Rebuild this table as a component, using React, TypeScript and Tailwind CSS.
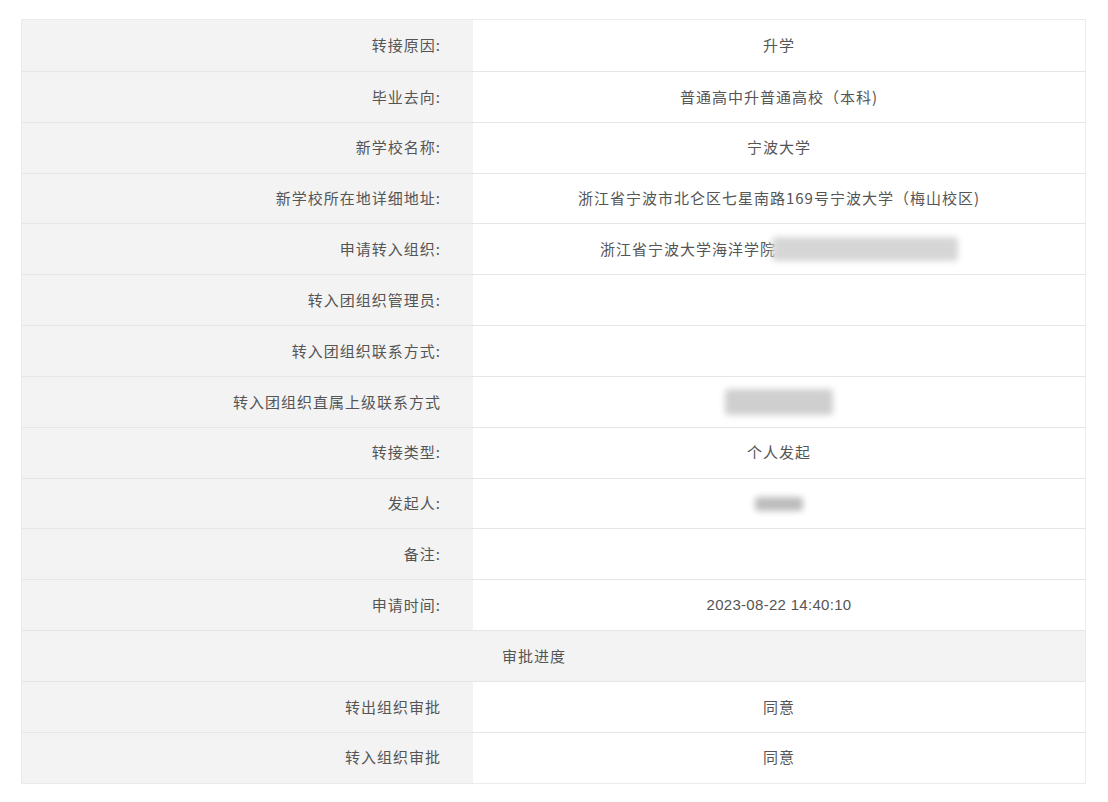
import React from 'react';

type Row = {
  label: string;
  value?: React.ReactNode;
};

const Smudge: React.FC<{ className: string }> = ({ className }) => (
  <span className={`inline-block rounded-sm blur-[3px] ${className}`} />
);

const rows: Row[] = [
  { label: '转接原因:', value: '升学' },
  { label: '毕业去向:', value: '普通高中升普通高校（本科)' },
  { label: '新学校名称:', value: '宁波大学' },
  { label: '新学校所在地详细地址:', value: '浙江省宁波市北仑区七星南路169号宁波大学（梅山校区)' },
  {
    label: '申请转入组织:',
    value: (
      <span className="flex items-center">
        <span>浙江省宁波大学海洋学院</span>
        <Smudge className="-ml-[4px] h-[24px] w-[186px] bg-[#d6d6d6]" />
      </span>
    ),
  },
  { label: '转入团组织管理员:' },
  { label: '转入团组织联系方式:' },
  {
    label: '转入团组织直属上级联系方式',
    value: <Smudge className="h-[26px] w-[108px] bg-[#cfcfcf]" />,
  },
  { label: '转接类型:', value: '个人发起' },
  { label: '发起人:', value: <Smudge className="h-[14px] w-[48px] bg-[#bdbdbd]" /> },
  { label: '备注:' },
  {
    label: '申请时间:',
    value: <span className="font-['Liberation_Sans',sans-serif] tracking-[0.3px]">2023-08-22 14:40:10</span>,
  },
];

const approvals: Row[] = [
  { label: '转出组织审批', value: '同意' },
  { label: '转入组织审批', value: '同意' },
];

const DataRow: React.FC<{ row: Row; first?: boolean }> = ({ row, first }) => (
  <div className={`flex h-[50.85px] ${first ? '' : 'border-t border-[#e6e6e6]'}`}>
    <div className="flex w-[451px] shrink-0 items-center justify-end bg-[#f3f3f3] pr-[32px]">
      {row.label}
    </div>
    <div className="flex flex-1 items-center justify-center bg-white">{row.value}</div>
  </div>
);

export default function App() {
  return (
    <div className="min-h-screen bg-white pl-[21px] pr-[22px] pt-[19px] font-['Noto_Sans_CJK_SC',sans-serif] text-[15px] text-[#555] tracking-[1px]">
      <div className="border border-[#ebebeb]">
        {rows.map((row, i) => (
          <DataRow key={row.label} row={row} first={i === 0} />
        ))}
        <div className="flex h-[50.85px] items-center border-t border-[#e6e6e6] bg-[#f3f3f3] pl-[480px]">
          审批进度
        </div>
        {approvals.map((row) => (
          <DataRow key={row.label} row={row} />
        ))}
      </div>
    </div>
  );
}
